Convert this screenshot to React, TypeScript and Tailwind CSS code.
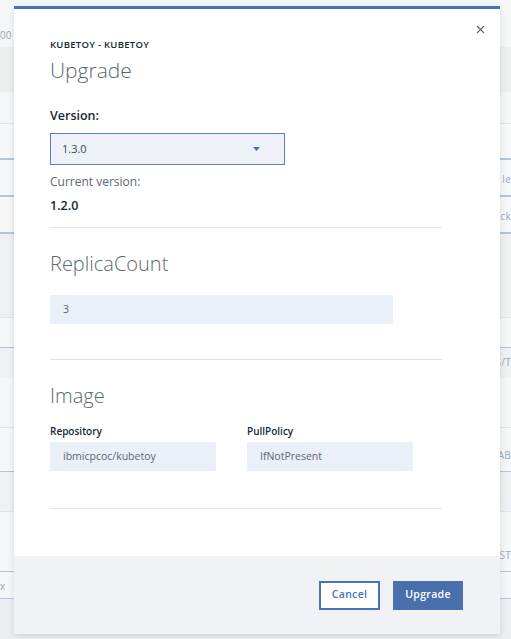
import { X } from 'lucide-react'

const font = { fontFamily: '"Open Sans", "Noto Sans", sans-serif' }

// faint page rows behind the modal overlay
const rows = [
  { h: 'h-[47px]', bg: 'bg-[#f5f6f8]', left: '00 .', right: '' , line: '' },
  { h: 'h-[45px]', bg: 'bg-[#eceef1]', left: '', right: '', line: '' },
  { h: 'h-[32px]', bg: 'bg-[#f5f6f8]', left: '', right: '', line: 'border-b border-[#e1e4e8]' },
  { h: 'h-[36px]', bg: 'bg-[#f6f7f9]', left: '', right: '', line: 'border-b-2 border-[#b5c3db]' },
  { h: 'h-[37px]', bg: 'bg-[#f6f7f9]', left: '', right: 'le', line: 'border-b-2 border-[#b5c3db]' },
  { h: 'h-[37px]', bg: 'bg-[#f6f7f9]', left: '', right: 'ck', line: 'border-b-2 border-[#b5c3db]' },
  { h: 'h-[40px]', bg: 'bg-[#eef0f3]', left: '', right: '', line: '' },
  { h: 'h-[44px]', bg: 'bg-[#eef0f3]', left: '', right: '', line: 'border-b border-[#e1e4e8]' },
  { h: 'h-[30px]', bg: 'bg-[#f5f6f8]', left: '', right: '', line: 'border-b border-[#b5c3db]' },
  { h: 'h-[30px]', bg: 'bg-[#eef0f3]', left: '', right: '3/T', line: '' },
  { h: 'h-[50px]', bg: 'bg-[#f5f6f8]', left: '', right: '', line: 'border-b border-[#e1e4e8]' },
  { h: 'h-[44px]', bg: 'bg-[#f5f6f8]', left: '', right: 'AB', line: 'border-b border-[#b5c3db]' },
  { h: 'h-[40px]', bg: 'bg-[#eef0f3]', left: '', right: '', line: 'border-b border-[#e1e4e8]' },
  { h: 'h-[60px]', bg: 'bg-[#f5f6f8]', left: '', right: 'EST', line: 'border-b border-[#b5c3db]' },
  { h: 'h-[27px]', bg: 'bg-[#f5f6f8]', left: 'x', right: '', line: 'border-b border-[#b5c3db]' },
  { h: 'h-[60px]', bg: 'bg-[#eceef1]', left: '', right: '', line: '' },
]

function Field({ value, className }: { value: string; className: string }) {
  return (
    <div className={`flex items-center bg-[#ebeff7] px-[13px] text-[10.5px] text-[#5a6872] ${className}`}>
      {value}
    </div>
  )
}

export default function App() {
  return (
    <div className="relative h-[639px] w-[511px] overflow-hidden bg-[#f5f6f8]" style={font}>
      {/* page behind the overlay */}
      <div className="flex flex-col">
        {rows.map((r, i) => (
          <div key={i} className={`flex items-end justify-between px-0 ${r.h} ${r.bg} ${r.line}`}>
            <span className="pb-1 text-[10px] text-[#9aa4ad]">{r.left}</span>
            <span className="pb-2 text-[10px] tracking-wide text-[#9aa8c0]">{r.right}</span>
          </div>
        ))}
      </div>

      {/* modal */}
      <div className="absolute left-[14px] top-[6px] flex h-[628px] w-[486px] flex-col border-t-[3px] border-[#4a72b4] bg-white shadow-[0_2px_6px_rgba(0,0,0,0.12)]">
        <button className="absolute right-[13px] top-[14px] text-[#5a6872]">
          <X size={13} strokeWidth={2} />
        </button>

        <div className="flex flex-1 flex-col pl-[36px] pr-[58px] pt-[29px]">
          <div className="text-[9.5px] font-semibold leading-[14px] tracking-[0.03em] text-[#152935]">KUBETOY - KUBETOY</div>
          <div className="mt-[4px] text-[21px] font-light leading-[28px] text-[#5a6872]">Upgrade</div>

          <div className="mt-[23px] text-[12.5px] font-semibold leading-[18px] text-[#152935]">Version:</div>
          <div className="mt-[8px] flex h-[32px] w-[235px] items-center justify-between border border-[#5b80c2] bg-[#eef1f8] pl-[11px] pr-[24px] text-[11px] text-[#3d4a55]">
            <span>1.3.0</span>
            <svg width="7" height="4" viewBox="0 0 7 4">
              <path d="M0 0h7L3.5 4z" fill="#4a72b4" />
            </svg>
          </div>

          <div className="mt-[9px] text-[12px] leading-[16px] text-[#5a6872]">Current version:</div>
          <div className="mt-[7px] text-[12.5px] font-semibold leading-[18px] text-[#152935]">1.2.0</div>

          <div className="mt-[12px] border-t border-[#dfe3e6]" />

          <div className="mt-[22px] text-[20px] font-light leading-[28px] text-[#5a6872]">ReplicaCount</div>
          <Field value="3" className="mt-[17px] h-[29px] w-[343px]" />

          <div className="mt-[35px] border-t border-[#dfe3e6]" />

          <div className="mt-[22px] text-[20px] font-light leading-[28px] text-[#5a6872]">Image</div>
          <div className="mt-[14px] flex gap-[31px]">
            <div className="flex flex-col">
              <div className="text-[10px] font-semibold leading-[14px] text-[#152935]">Repository</div>
              <Field value="ibmicpcoc/kubetoy" className="mt-[4px] h-[29px] w-[166px]" />
            </div>
            <div className="flex flex-col">
              <div className="text-[10px] font-semibold leading-[14px] text-[#152935]">PullPolicy</div>
              <Field value="IfNotPresent" className="mt-[4px] h-[29px] w-[166px]" />
            </div>
          </div>

          <div className="mt-[37px] border-t border-[#dfe3e6]" />
        </div>

        <div className="flex h-[78px] items-center justify-end gap-[13px] bg-[#f0f2f6] pr-[37px]">
          <button className="h-[29px] w-[61px] border-2 border-[#4a72b4] bg-white text-[10.5px] font-semibold tracking-[0.03em] text-[#4a72b4]">
            Cancel
          </button>
          <button className="h-[29px] w-[70px] bg-[#4a6fad] text-[10.5px] font-semibold tracking-[0.03em] text-white">
            Upgrade
          </button>
        </div>
      </div>
    </div>
  )
}
